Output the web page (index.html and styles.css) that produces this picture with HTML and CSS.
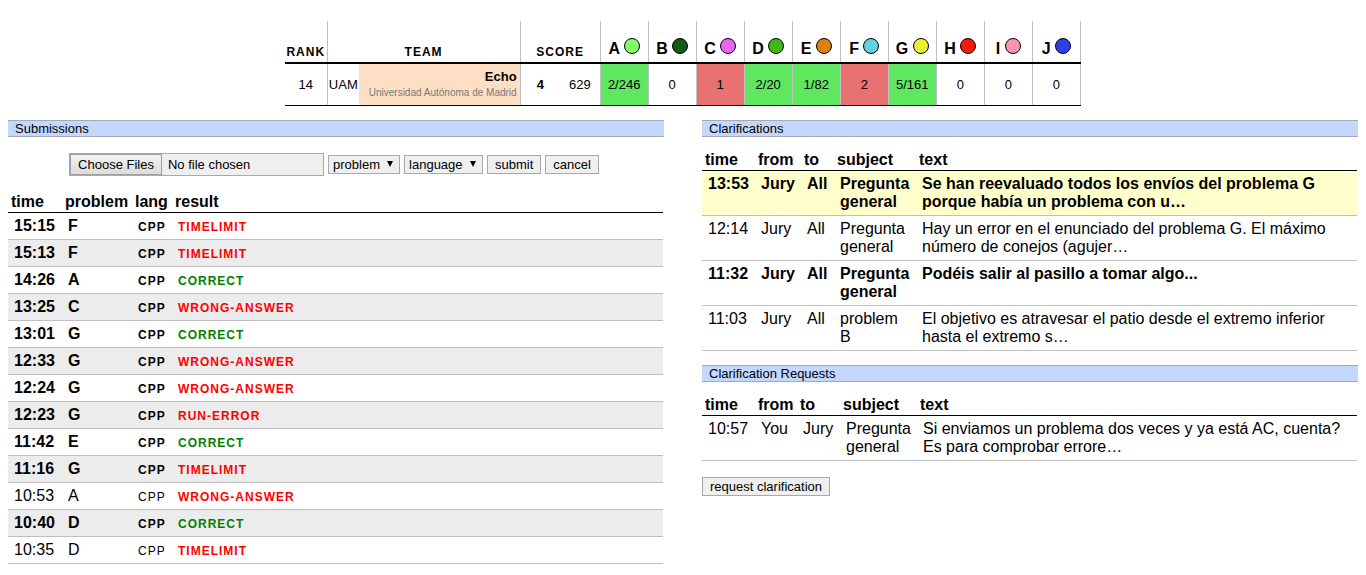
FILE: index.html
```html
<!DOCTYPE html>
<html lang="en">
<head>
<meta charset="utf-8">
<title>Echo - Team overview</title>
<link rel="stylesheet" href="styles.css">
</head>
<body>
<table class="scoreboard">
  <colgroup><col class="c-rank"><col class="c-affil"><col class="c-team"><col class="c-solved"><col class="c-time"></colgroup>
  <colgroup class="c-prob" span="10"></colgroup>
  <thead>
    <tr>
      <th class="caps edge" scope="col">RANK</th>
      <th class="caps edge" scope="col" colspan="2">TEAM</th>
      <th class="caps edge" scope="col" colspan="2">SCORE</th>
      <th class="edge" scope="col">A <svg class="balloon" viewBox="0 0 16 16"><circle cx="8" cy="8" r="7.5" fill="#7fff66"/></svg></th>
      <th class="edge" scope="col">B <svg class="balloon" viewBox="0 0 16 16"><circle cx="8" cy="8" r="7.5" fill="#125a16"/></svg></th>
      <th class="edge" scope="col">C <svg class="balloon" viewBox="0 0 16 16"><circle cx="8" cy="8" r="7.5" fill="#ea66f2"/></svg></th>
      <th class="edge" scope="col">D <svg class="balloon" viewBox="0 0 16 16"><circle cx="8" cy="8" r="7.5" fill="#3cb915"/></svg></th>
      <th class="edge" scope="col">E <svg class="balloon" viewBox="0 0 16 16"><circle cx="8" cy="8" r="7.5" fill="#e07e10"/></svg></th>
      <th class="edge" scope="col">F <svg class="balloon" viewBox="0 0 16 16"><circle cx="8" cy="8" r="7.5" fill="#62d2de"/></svg></th>
      <th class="edge" scope="col">G <svg class="balloon" viewBox="0 0 16 16"><circle cx="8" cy="8" r="7.5" fill="#e9f032"/></svg></th>
      <th class="edge" scope="col">H <svg class="balloon" viewBox="0 0 16 16"><circle cx="8" cy="8" r="7.5" fill="#f7190b"/></svg></th>
      <th class="edge" scope="col">I <svg class="balloon" viewBox="0 0 16 16"><circle cx="8" cy="8" r="7.5" fill="#ff94b0"/></svg></th>
      <th class="edge" scope="col">J <svg class="balloon" viewBox="0 0 16 16"><circle cx="8" cy="8" r="7.5" fill="#2c3fea"/></svg></th>
    </tr>
  </thead>
  <tbody>
    <tr>
      <td class="edge">14</td>
      <td>UAM</td>
      <td class="team edge"><b>Echo</b><span class="univ">Universidad Autónoma de Madrid</span></td>
      <td><b>4</b></td>
      <td class="edge">629</td>
      <td class="edge ok">2/246</td>
      <td class="edge">0</td>
      <td class="edge bad">1</td>
      <td class="edge ok">2/20</td>
      <td class="edge ok">1/82</td>
      <td class="edge bad">2</td>
      <td class="edge ok">5/161</td>
      <td class="edge">0</td>
      <td class="edge">0</td>
      <td class="edge">0</td>
    </tr>
  </tbody>
</table>

<main class="columns">
  <section>
    <h1 class="bar">Submissions</h1>
    <form class="submit-form">
      <input class="file" type="file" multiple aria-label="Source files">
      <select class="control drop" aria-label="Problem"><option>problem</option></select>
      <select class="control drop" aria-label="Language"><option>language</option></select>
      <button class="control" type="button">submit</button>
      <button class="control" type="reset">cancel</button>
    </form>
    <table class="list submissions">
      <colgroup><col class="s-time"><col class="s-problem"><col class="s-lang"><col></colgroup>
      <thead><tr><th scope="col">time</th><th scope="col">problem</th><th scope="col">lang</th><th scope="col">result</th></tr></thead>
      <tbody>
        <tr class="unread"><td>15:15</td><td>F</td><td><span class="caps">CPP</span></td><td><span class="caps wrong">TIMELIMIT</span></td></tr>
        <tr class="unread"><td>15:13</td><td>F</td><td><span class="caps">CPP</span></td><td><span class="caps wrong">TIMELIMIT</span></td></tr>
        <tr class="unread"><td>14:26</td><td>A</td><td><span class="caps">CPP</span></td><td><span class="caps correct">CORRECT</span></td></tr>
        <tr class="unread"><td>13:25</td><td>C</td><td><span class="caps">CPP</span></td><td><span class="caps wrong">WRONG-ANSWER</span></td></tr>
        <tr class="unread"><td>13:01</td><td>G</td><td><span class="caps">CPP</span></td><td><span class="caps correct">CORRECT</span></td></tr>
        <tr class="unread"><td>12:33</td><td>G</td><td><span class="caps">CPP</span></td><td><span class="caps wrong">WRONG-ANSWER</span></td></tr>
        <tr class="unread"><td>12:24</td><td>G</td><td><span class="caps">CPP</span></td><td><span class="caps wrong">WRONG-ANSWER</span></td></tr>
        <tr class="unread"><td>12:23</td><td>G</td><td><span class="caps">CPP</span></td><td><span class="caps wrong">RUN-ERROR</span></td></tr>
        <tr class="unread"><td>11:42</td><td>E</td><td><span class="caps">CPP</span></td><td><span class="caps correct">CORRECT</span></td></tr>
        <tr class="unread"><td>11:16</td><td>G</td><td><span class="caps">CPP</span></td><td><span class="caps wrong">TIMELIMIT</span></td></tr>
        <tr><td>10:53</td><td>A</td><td><span class="caps">CPP</span></td><td><span class="caps wrong">WRONG-ANSWER</span></td></tr>
        <tr class="unread"><td>10:40</td><td>D</td><td><span class="caps">CPP</span></td><td><span class="caps correct">CORRECT</span></td></tr>
        <tr><td>10:35</td><td>D</td><td><span class="caps">CPP</span></td><td><span class="caps wrong">TIMELIMIT</span></td></tr>
      </tbody>
    </table>
  </section>

  <section>
    <h1 class="bar">Clarifications</h1>
    <table class="list clars">
      <colgroup><col class="q-time"><col class="q-from"><col class="q-to"><col class="q-subject"><col></colgroup>
      <thead><tr><th scope="col">time</th><th scope="col">from</th><th scope="col">to</th><th scope="col">subject</th><th scope="col">text</th></tr></thead>
      <tbody>
        <tr class="unread active"><td>13:53</td><td>Jury</td><td>All</td><td>Pregunta general</td><td>Se han reevaluado todos los envíos del problema G porque había un problema con u…</td></tr>
        <tr><td>12:14</td><td>Jury</td><td>All</td><td>Pregunta general</td><td>Hay un error en el enunciado del problema G. El máximo número de conejos (agujer…</td></tr>
        <tr class="unread"><td>11:32</td><td>Jury</td><td>All</td><td>Pregunta general</td><td>Podéis salir al pasillo a tomar algo...</td></tr>
        <tr><td>11:03</td><td>Jury</td><td>All</td><td>problem B</td><td>El objetivo es atravesar el patio desde el extremo inferior hasta el extremo s…</td></tr>
      </tbody>
    </table>
    <h1 class="bar">Clarification Requests</h1>
    <table class="list clars">
      <colgroup><col class="q-time"><col class="r-from"><col class="r-to"><col class="r-subject"><col></colgroup>
      <thead><tr><th scope="col">time</th><th scope="col">from</th><th scope="col">to</th><th scope="col">subject</th><th scope="col">text</th></tr></thead>
      <tbody>
        <tr><td>10:57</td><td>You</td><td>Jury</td><td>Pregunta general</td><td>Si enviamos un problema dos veces y ya está AC, cuenta? Es para comprobar errore…</td></tr>
      </tbody>
    </table>
    <button class="control" type="button">request clarification</button>
  </section>
</main>
</body>
</html>
```
FILE: styles.css
```css
body {
  margin: 21px 8px 8px;
  background: #fff;
  color: #000;
  font: 16px/18px "Liberation Sans", Arial, sans-serif;
}

table {
  border-collapse: collapse;
  table-layout: fixed;
}

.caps {
  font-size: 12px;
  line-height: 14px;
  letter-spacing: 1px;
}

/* Scoreboard */
.scoreboard {
  width: 796px;
  margin: 0 auto 14px;
  font-size: 13px;
  text-align: center;
}
.c-rank { width: 42px; }
.c-affil { width: 32px; }
.c-team { width: 161px; }
.c-solved,
.c-time { width: 40px; }
.c-prob { width: 48px; }
.scoreboard th {
  height: 37px;
  padding: 0 0 4px;
  border-bottom: 2px solid #000;
  font-size: 16px;
  vertical-align: bottom;
  white-space: nowrap;
}
.scoreboard th.caps {
  height: 38px;
  padding-bottom: 3px;
  font-size: 12px;
}
.scoreboard td {
  height: 41px;
  padding: 0;
  border-bottom: 1px solid #000;
}
.scoreboard .edge { border-right: 1px solid #bfbfbf; }
.scoreboard tbody .team {
  padding-right: 3px;
  background: #ffdfc4;
  line-height: 16px;
  text-align: right;
}
.univ {
  display: block;
  color: #777;
  font-size: 10px;
  white-space: nowrap;
}
.ok { background: #60e760; }
.bad { background: #e87272; }
.balloon {
  width: 16px;
  height: 16px;
  stroke: #000;
  vertical-align: 0;
}

/* Two-column overview */
.columns {
  display: grid;
  grid-template-columns: 1fr 1fr;
  gap: 38px;
}
.bar {
  margin: 0;
  padding-left: 7px;
  border: solid #a5a9b3;
  border-width: 1px 0;
  background: #c4d7ff;
  font-size: 13px;
  font-weight: normal;
  line-height: 15px;
}

.submit-form {
  display: flex;
  justify-content: center;
  align-items: center;
  gap: 4px;
  margin: 16px 0 17px;
  padding-right: 4px;
}
.control,
.file {
  box-sizing: border-box;
  border: 1px solid #a9a9a9;
  border-radius: 0;
  background: #efefef;
  color: #000;
  font: 13px/15px "Liberation Sans", Arial, sans-serif;
}
.control {
  height: 19px;
  padding: 0 7px;
}
.drop {
  appearance: none;
  padding: 0 19px 0 4px;
  background: #efefef url("data:image/svg+xml,%3Csvg xmlns='http://www.w3.org/2000/svg' width='6' height='6'%3E%3Cpath d='M0 0h6L3 6z'/%3E%3C/svg%3E") no-repeat right 6px top 5px;
}
.file {
  width: 255px;
  height: 23px;
}
.file::file-selector-button {
  box-sizing: border-box;
  height: 21px;
  margin: 0 6px 0 0;
  padding: 0 7px;
  border: 1px solid #a0a0a0;
  border-radius: 0;
  background: linear-gradient(#f2f2f2, #dcdcdc);
  font: 13px/15px "Liberation Sans", Arial, sans-serif;
}

/* Lists */
.list {
  width: calc(100% - 1px);
  text-align: left;
}
.list th {
  padding: 0 3px 1px;
  border-bottom: 1px solid #000;
}
.list td {
  padding: 4px 6px;
  border-bottom: 1px solid #bfbfbf;
  vertical-align: top;
}
.unread { font-weight: bold; }
.active { background: #ffffcc; }
.submissions tbody tr:nth-child(even) { background: #ececec; }
.s-time { width: 54px; }
.s-problem { width: 70px; }
.s-lang { width: 40px; }
.clars { margin: 14px 0; }
.clars + .control { margin-top: 2px; }
.q-time { width: 53px; }
.q-from { width: 46px; }
.q-to { width: 33px; }
.q-subject { width: 82px; }
.r-from { width: 42px; }
.r-to { width: 43px; }
.r-subject { width: 77px; }
.correct {
  color: #008000;
  font-weight: bold;
}
.wrong {
  color: #f00;
  font-weight: bold;
}
```
